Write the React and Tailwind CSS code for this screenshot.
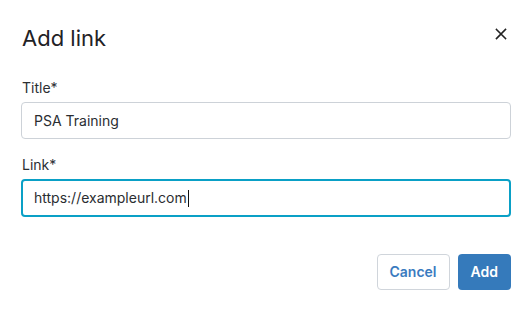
import React from 'react';

const font = { fontFamily: 'Inter, "Noto Sans", sans-serif' };

const App = () => {
  return (
    <div className="w-[532px] h-[310px] bg-white text-[#23262b] px-[21px]" style={font}>
      {/* Header */}
      <div className="flex items-start justify-between pt-6 pl-px">
        <h2 className="text-[22px] leading-[28px] font-normal text-[#1f2226]">Add link</h2>
        <button className="mt-[3px] mr-[3px] w-[14px] h-[14px] flex items-center justify-center text-[#222]">
          <svg width="12" height="12" viewBox="0 0 12 12" fill="none" stroke="currentColor" strokeWidth="1.6" strokeLinecap="square">
            <path d="M1.5 1.5 L10.5 10.5 M10.5 1.5 L1.5 10.5" />
          </svg>
        </button>
      </div>

      {/* Title field */}
      <div className="mt-[26px]">
        <label className="block text-sm leading-5 pl-px text-[#2c2f33]">Title*</label>
        <div className="mt-1 h-[37px] flex items-center rounded-[4px] border border-[#cdd2d8] px-3 text-sm text-[#2a2d31]">
          PSA Training
        </div>
      </div>

      {/* Link field */}
      <div className="mt-4">
        <label className="block text-sm leading-5 pl-px text-[#2c2f33]">Link*</label>
        <div className="mt-[4px] h-[38px] flex items-center rounded-[4px] border-2 border-[#0aa0c6] px-[11px] text-sm text-[#2a2d31]">
          <span>https://exampleurl.com</span>
          <span className="ml-px w-px h-[17px] bg-[#111]" />
        </div>
      </div>

      {/* Actions */}
      <div className="mt-[37px] flex justify-end gap-2">
        <button className="h-9 px-3 rounded-[4px] border border-[#d0d5db] bg-white text-sm font-semibold text-[#3a7bbf]">
          Cancel
        </button>
        <button className="h-9 px-[13px] rounded-[4px] bg-[#357abb] text-sm font-semibold text-white">
          Add
        </button>
      </div>
    </div>
  );
};

export default App;
